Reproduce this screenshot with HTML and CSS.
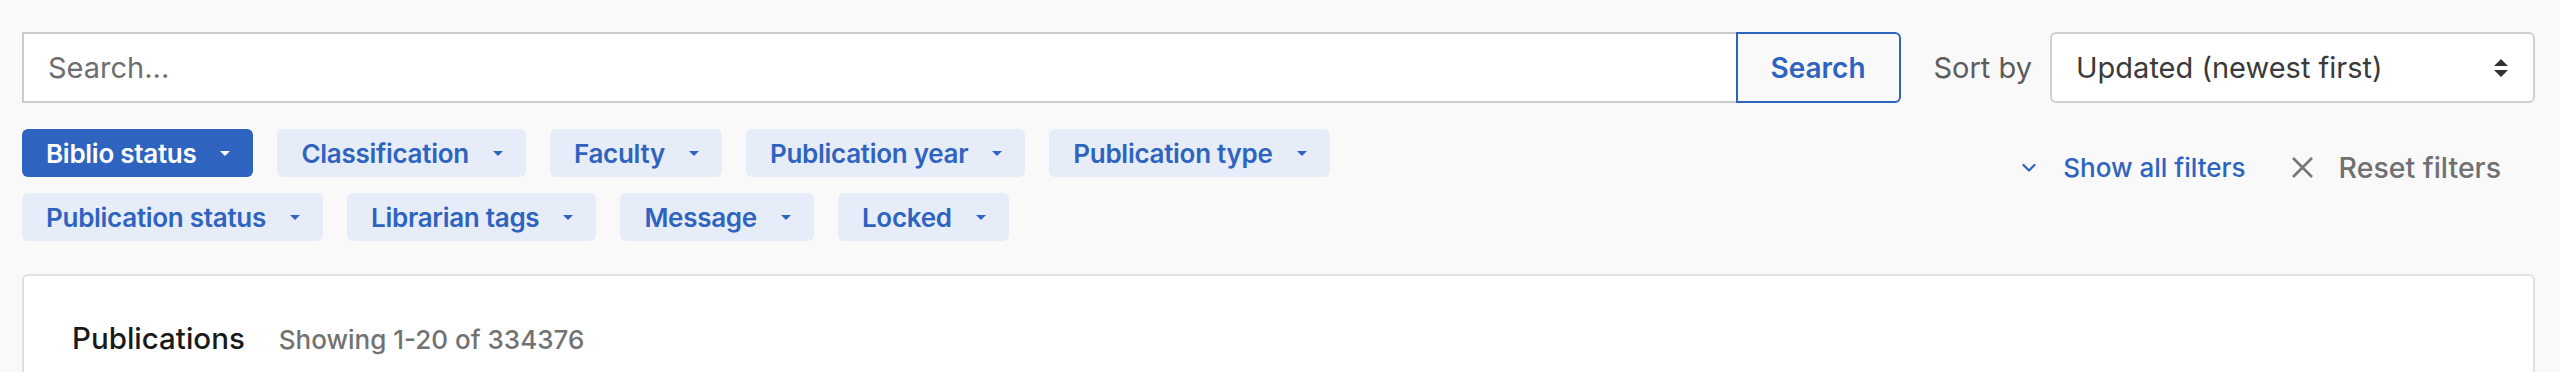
FILE: index.html
```html
<!DOCTYPE html>
<html lang="en">
<head>
<meta charset="utf-8">
<title>Publications</title>
<link rel="stylesheet" href="styles.css">
</head>
<body>
<main class="page">
  <form class="toolbar">
    <div class="search-group">
      <input class="search-input" type="text" placeholder="Search...">
      <button class="search-btn" type="button">Search</button>
    </div>
    <label class="sort-label">Sort by</label>
    <div class="sort-select">
      <span class="sort-value">Updated (newest first)</span>
      <svg class="sort-arrows" width="16" height="18" viewBox="0 0 16 18"><path d="M8 0 L15 7 L1 7 Z M8 18 L15 11 L1 11 Z" fill="#333"/></svg>
    </div>
  </form>

  <div class="filters">
    <div class="chips">
      <button class="chip chip-active" type="button">Biblio status<span class="caret"></span></button>
      <button class="chip" type="button">Classification<span class="caret"></span></button>
      <button class="chip" type="button">Faculty<span class="caret"></span></button>
      <button class="chip" type="button">Publication year<span class="caret"></span></button>
      <button class="chip" type="button">Publication type<span class="caret"></span></button>
      <button class="chip" type="button">Publication status<span class="caret"></span></button>
      <button class="chip" type="button">Librarian tags<span class="caret"></span></button>
      <button class="chip" type="button">Message<span class="caret"></span></button>
      <button class="chip" type="button">Locked<span class="caret"></span></button>
    </div>
    <div class="filter-actions">
      <button class="action action-show" type="button">
        <svg class="chev" width="14" height="10" viewBox="0 0 14 10"><path d="M1.5 2 L7 7.5 L12.5 2" fill="none" stroke="#2f63c0" stroke-width="2.2" stroke-linecap="round" stroke-linejoin="round"/></svg>
        <span>Show all filters</span>
      </button>
      <button class="action action-reset" type="button">
        <svg class="xicon" width="23" height="21" viewBox="0 0 23 21"><path d="M2 1 L21 20 M21 1 L2 20" fill="none" stroke="#767676" stroke-width="2.6"/></svg>
        <span>Reset filters</span>
      </button>
    </div>
  </div>

  <section class="card">
    <header class="card-header">
      <h2 class="card-title">Publications</h2>
      <span class="card-count">Showing 1-20 of 334376</span>
    </header>
  </section>
</main>
</body>
</html>
```

FILE: styles.css
```css
* { box-sizing: border-box; }

html, body {
  margin: 0;
  padding: 0;
  background: #f9f9f9;
  font-family: Inter, "Noto Sans", sans-serif;
}

.page {
  padding: 32px 25px 0 22px;
}

.toolbar {
  display: flex;
  align-items: center;
  margin: 0;
}

.search-group {
  display: flex;
  flex: 1;
  height: 71px;
}

.search-input {
  flex: 1;
  height: 100%;
  border: 2px solid #cbcbcb;
  border-right: none;
  background: #fff;
  padding: 0 24px;
  font-family: inherit;
  font-size: 29px;
  color: #333;
  outline: none;
}

.search-input::placeholder {
  color: #6e6e6e;
}

.search-btn {
  width: 165px;
  height: 100%;
  border: 2px solid #2f63c0;
  border-radius: 0 6px 6px 0;
  background: #f9f9f9;
  color: #2f63c0;
  font-family: inherit;
  font-size: 28px;
  font-weight: 600;
  padding: 0;
}

.sort-label {
  margin-left: 33px;
  font-size: 29px;
  color: #5c5c5c;
}

.sort-select {
  margin-left: 18px;
  width: 485px;
  height: 71px;
  border: 2px solid #cfcfcf;
  border-radius: 6px;
  background: #fff;
  display: flex;
  align-items: center;
  justify-content: space-between;
  padding: 0 24px 0 24px;
}

.sort-value {
  font-size: 29px;
  color: #3a3a3a;
}

.filters {
  display: flex;
  align-items: flex-start;
  justify-content: space-between;
  margin-top: 26px;
}

.chips {
  display: flex;
  flex-wrap: wrap;
  gap: 16px 24px;
  max-width: 1420px;
}

.chip {
  display: inline-flex;
  align-items: center;
  height: 48px;
  padding: 0 23px 0 24px;
  border: none;
  border-radius: 6px;
  background: #e7edf8;
  color: #2f63c0;
  font-family: inherit;
  font-size: 26px;
  letter-spacing: -0.28px;
  font-weight: 600;
}

.chip-active {
  background: #2f63c0;
  color: #fff;
}

.caret {
  margin-left: 24px;
  width: 0;
  height: 0;
  border-left: 5px solid transparent;
  border-right: 5px solid transparent;
  border-top: 5px solid currentColor;
}

.filter-actions {
  display: flex;
  align-items: center;
  gap: 45px;
  margin-top: 21px;
  margin-right: 34px;
}

.action {
  display: inline-flex;
  align-items: center;
  border: none;
  background: none;
  padding: 0;
  font-family: inherit;
  font-size: 26px;
  font-weight: 500;
}

.action-show {
  color: #2f63c0;
  gap: 27px;
}

.action-reset {
  color: #707070;
  gap: 25px;
  font-size: 28.5px;
}

.card {
  margin-top: 33px;
  background: #fff;
  border: 2px solid #e0e0e0;
  border-radius: 6px;
  min-height: 200px;
  padding: 44px 48px;
}

.card-header {
  display: flex;
  align-items: baseline;
  gap: 34px;
}

.card-title {
  margin: 0;
  font-size: 29.5px;
  font-weight: 500;
  color: #1a1a1a;
}

.card-count {
  font-size: 26px;
  font-weight: 500;
  color: #727272;
}
```
